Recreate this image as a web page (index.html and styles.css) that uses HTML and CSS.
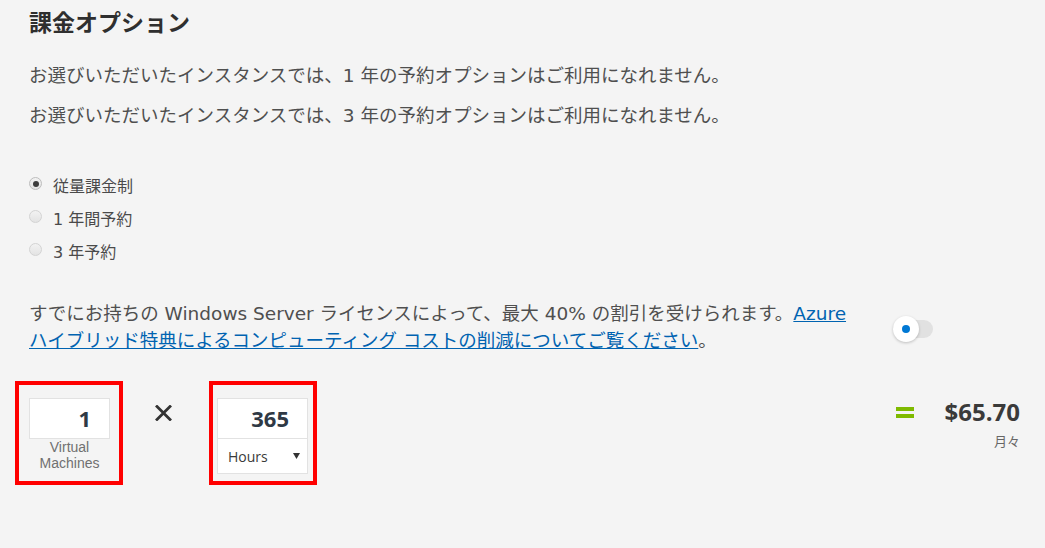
FILE: index.html
```html
<!DOCTYPE html>
<html lang="ja">
<head>
<meta charset="utf-8">
<title>課金オプション</title>
<link rel="stylesheet" href="styles.css">
</head>
<body>
<div class="content">
  <h1 class="title">課金オプション</h1>
  <p class="note">お選びいただいたインスタンスでは、1 年の予約オプションはご利用になれません。</p>
  <p class="note note-second">お選びいただいたインスタンスでは、3 年の予約オプションはご利用になれません。</p>

  <ul class="radios">
    <li class="radio-row"><span class="radio checked"></span><span class="radio-label">従量課金制</span></li>
    <li class="radio-row"><span class="radio"></span><span class="radio-label">1 年間予約</span></li>
    <li class="radio-row"><span class="radio"></span><span class="radio-label">3 年予約</span></li>
  </ul>

  <div class="ahb">
    <p class="ahb-text">すでにお持ちの Windows Server ライセンスによって、最大 40% の割引を受けられます。<a class="link" href="#">Azure<br>ハイブリッド特典によるコンピューティング コストの削減についてご覧ください</a>。</p>
    <div class="toggle">
      <span class="toggle-track"></span>
      <span class="toggle-knob"><span class="toggle-dot"></span></span>
    </div>
  </div>

  <div class="calc-row">
    <div class="highlight hl-first">
      <div class="field">
        <div class="num-box">1</div>
        <div class="field-label"><span class="label-line">Virtual</span><span class="label-line">Machines</span></div>
      </div>
    </div>
    <svg class="times" width="17" height="16" viewBox="0 0 17 16">
      <path d="M2 1.5 L15 14.5 M15 1.5 L2 14.5" stroke="#333" stroke-width="2.8" stroke-linecap="square" fill="none"/>
    </svg>
    <div class="highlight hl-second">
      <div class="field field-wide">
        <div class="num-box">365</div>
        <div class="select-box">
          <span class="select-text">Hours</span>
          <svg class="select-arrow" width="7" height="6" viewBox="0 0 7 6"><path d="M0 0 H7 L3.5 6 Z" fill="#333"/></svg>
        </div>
      </div>
    </div>
    <div class="result">
      <span class="equals"><span class="eq-bar"></span><span class="eq-bar"></span></span>
      <div class="price-block">
        <div class="price">$65.70</div>
        <div class="period">月々</div>
      </div>
    </div>
  </div>
</div>
</body>
</html>
```

FILE: styles.css
```css
html, body {
  margin: 0;
  padding: 0;
  background: #f4f4f4;
}

body {
  width: 1045px;
  height: 548px;
  overflow: hidden;
  font-family: "DejaVu Sans", "Noto Sans CJK JP", sans-serif;
  color: #4f4f4f;
}

.content {
  padding: 6px 25px 0 29px;
}

.title {
  margin: 0;
  font-family: "Noto Sans CJK JP", sans-serif;
  font-size: 23px;
  line-height: 30px;
  font-weight: 700;
  color: #2f2f2f;
}

.note {
  margin: 25.5px 0 0;
  font-size: 18.5px;
  line-height: 27px;
}

.note-second {
  margin-top: 13px;
}

.radios {
  list-style: none;
  margin: 40px 0 0;
  padding: 0;
}

.radio-row {
  display: flex;
  align-items: center;
  height: 33px;
}

.radio {
  box-sizing: border-box;
  width: 13px;
  height: 13px;
  border-radius: 50%;
  border: 1px solid #d3d3d3;
  background: linear-gradient(#f2f2f2, #e3e3e3);
  margin-bottom: 3px;
  display: flex;
  align-items: center;
  justify-content: center;
}

.radio.checked {
  border-color: #bdbdbd;
}

.radio.checked::after {
  content: "";
  width: 6px;
  height: 6px;
  border-radius: 50%;
  background: #3c3c3c;
}

.radio-label {
  margin-left: 11px;
  font-size: 16px;
  color: #4a4a4a;
}

.ahb {
  display: flex;
  align-items: center;
  margin-top: 32px;
}

.ahb-text {
  margin: 0;
  flex: 0 0 840px;
  font-size: 18.5px;
  line-height: 27px;
}

.link {
  color: #0063b1;
  text-decoration: underline;
}

.toggle {
  position: relative;
  width: 40px;
  height: 26px;
  margin: 5px 0 0 24px;
}

.toggle-track {
  position: absolute;
  left: 0;
  right: 0;
  top: 4px;
  height: 18px;
  border-radius: 9px;
  background: #e1e1e1;
}

.toggle-knob {
  position: absolute;
  left: 0;
  top: 0;
  width: 26px;
  height: 26px;
  border-radius: 50%;
  background: #fff;
  box-shadow: 0 1px 3px rgba(0, 0, 0, 0.22);
  display: flex;
  align-items: center;
  justify-content: center;
}

.toggle-dot {
  width: 8px;
  height: 8px;
  border-radius: 50%;
  background: #0078d4;
}

.calc-row {
  display: flex;
  align-items: flex-start;
  margin: 27.5px 0 0 -14px;
}

.highlight {
  box-sizing: border-box;
  width: 108px;
  height: 104px;
  border: 4px solid #ff0000;
  padding-top: 13px;
}

.hl-first {
  padding-left: 10px;
}

.hl-second {
  padding-left: 4px;
}

.field {
  width: 81px;
}

.field-wide {
  width: 91px;
}

.num-box {
  box-sizing: border-box;
  height: 41px;
  background: #fff;
  border: 1px solid #e2e2e2;
  padding-right: 18px;
  text-align: right;
  font-family: "Open Sans", sans-serif;
  font-size: 22px;
  line-height: 39px;
  font-weight: 700;
  color: #2f3945;
}

.field-label {
  display: flex;
  flex-direction: column;
  align-items: center;
  font-family: "Liberation Sans", sans-serif;
  font-size: 14px;
  color: #707070;
}

.label-line {
  display: block;
  height: 16px;
  line-height: 16px;
}

.select-box {
  box-sizing: border-box;
  height: 35px;
  background: #fff;
  border: 1px solid #e2e2e2;
  border-top: 0;
  display: flex;
  align-items: center;
  justify-content: space-between;
  padding: 0 7px 0 10px;
}

.select-text {
  font-family: "Open Sans", sans-serif;
  font-size: 14px;
  color: #3a3a3a;
}

.select-arrow {
  display: block;
}

.times {
  display: block;
  margin: 23.5px 37px 0 32px;
}

.result {
  margin-left: auto;
  display: flex;
  align-items: flex-start;
}

.equals {
  display: flex;
  flex-direction: column;
  gap: 3px;
  margin-top: 26px;
  margin-right: 31px;
}

.eq-bar {
  display: block;
  width: 18px;
  height: 4px;
  background: #7fba00;
}

.price-block {
  text-align: right;
  padding-top: 16px;
}

.price {
  font-family: "Open Sans", sans-serif;
  font-size: 24px;
  line-height: 30px;
  font-weight: 700;
  color: #3a3a3a;
}

.period {
  margin-top: 5px;
  font-family: "Noto Sans CJK JP", sans-serif;
  font-size: 13px;
  line-height: 18px;
  color: #666;
}
```
